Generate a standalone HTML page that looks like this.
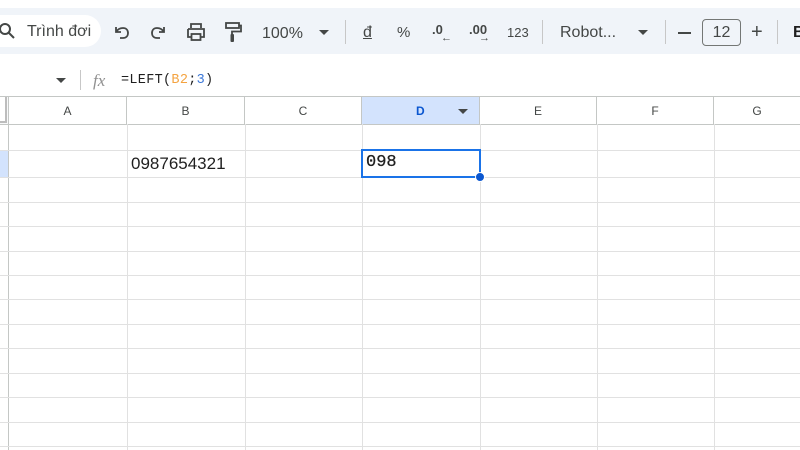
<!DOCTYPE html>
<html><head><meta charset="utf-8"><style>
*{margin:0;padding:0;box-sizing:border-box}
body{width:800px;height:450px;overflow:hidden;background:#fff;font-family:"Liberation Sans",Arial,sans-serif;position:relative;color:#444746}
.abs{position:absolute}
.tb{left:0;top:8px;width:800px;height:46px;background:#f0f4f9}
.pill{left:-20px;top:15px;width:121px;height:32px;background:#fff;border-radius:16px}
.t{position:absolute;font-size:16px;color:#444746;white-space:nowrap}
.sep{position:absolute;width:1px;background:#c7c7c7}
.vl{position:absolute;width:1px;background:#e1e1e1;top:124px;height:326px}
.hl{position:absolute;height:1px;background:#e1e1e1;left:0;width:800px}
.ch{position:absolute;top:97px;height:28px;font-size:12px;color:#444746;text-align:center;line-height:28px;border-right:1px solid #c4c7c5}
</style></head><body>
<div class="abs tb"></div>
<div class="abs pill"></div>
<svg class="abs" style="left:0;top:22px" width="18" height="18" viewBox="0 0 18 18"><circle cx="5" cy="7" r="5" fill="none" stroke="#444746" stroke-width="2"/><path d="M8.5 10.5L14 16" stroke="#444746" stroke-width="2"/></svg>
<div class="t" style="left:27px;top:23px">Trình đơi</div>
<svg class="abs" style="left:112px;top:23px" width="20" height="18" viewBox="0 0 20 18"><path d="M4 4v5h5M4.5 8.5C6 6 8 5 11 5c3 0 5 2 5 5s-2 5-5 5H8" fill="none" stroke="#444746" stroke-width="1.8"/></svg>
<svg class="abs" style="left:148px;top:23px" width="20" height="18" viewBox="0 0 20 18"><path d="M16 4v5h-5M15.5 8.5C14 6 12 5 9 5 6 5 4 7 4 10s2 5 5 5h3" fill="none" stroke="#444746" stroke-width="1.8"/></svg>
<svg class="abs" style="left:186px;top:22px" width="20" height="20" viewBox="0 0 20 20"><path d="M5 6V2h10v4M2 7h16v8h-3M5 15H2V7" fill="none" stroke="#444746" stroke-width="1.8"/><rect x="5.5" y="12" width="9" height="6" fill="none" stroke="#444746" stroke-width="1.8"/></svg>
<svg class="abs" style="left:224px;top:21px" width="18" height="22" viewBox="0 0 18 22"><rect x="2" y="2" width="13" height="5" fill="none" stroke="#444746" stroke-width="1.8"/><path d="M15 4.5h2v6H8v3" fill="none" stroke="#444746" stroke-width="1.8"/><rect x="6.5" y="13" width="3.5" height="8" rx="1" fill="#444746"/></svg>
<div class="t" style="left:262px;top:25px;font-size:16px">100%</div>
<svg class="abs" style="left:319px;top:30px" width="10" height="6"><path d="M0 0h10L5 5z" fill="#444746"/></svg>
<div class="sep" style="left:345px;top:20px;height:24px"></div>
<div class="t" style="left:363px;top:24px;text-decoration:underline">đ</div>
<div class="t" style="left:397px;top:24px;font-size:15px">%</div>
<div class="t" style="left:432px;top:22px;font-size:13px;font-weight:bold">.0</div>
<div class="t" style="left:441px;top:32px;font-size:11px">←</div>
<div class="t" style="left:469px;top:22px;font-size:13px;font-weight:bold">.00</div>
<div class="t" style="left:479px;top:32px;font-size:11px">→</div>
<div class="t" style="left:507px;top:25px;font-size:13px">123</div>
<div class="sep" style="left:542px;top:20px;height:24px"></div>
<div class="t" style="left:560px;top:24px">Robot...</div>
<svg class="abs" style="left:638px;top:30px" width="10" height="6"><path d="M0 0h10L5 5z" fill="#444746"/></svg>
<div class="sep" style="left:665px;top:20px;height:24px"></div>
<div class="abs" style="left:678px;top:32px;width:13px;height:2px;background:#444746"></div>
<div class="abs" style="left:702px;top:19px;width:39px;height:27px;border:1px solid #747775;border-radius:4px;font-size:16px;text-align:center;line-height:25px;color:#444746">12</div>
<div class="t" style="left:751px;top:21px;font-size:20px">+</div>
<div class="sep" style="left:777px;top:20px;height:24px"></div>
<div class="t" style="left:793px;top:24px;font-weight:bold;color:#1f1f1f">B</div>
<!-- formula bar -->
<svg class="abs" style="left:56px;top:78px" width="10" height="6"><path d="M0 0h10L5 5z" fill="#444746"/></svg>
<div class="sep" style="left:80px;top:70px;height:20px"></div>
<div class="t" style="left:93px;top:71px;font-family:'Liberation Serif',serif;font-style:italic;font-size:17px;color:#909090">fx</div>
<div class="t" style="left:121px;top:73px;font-family:'Liberation Mono',monospace;font-size:13.5px;color:#1f1f1f;letter-spacing:0.3px">=LEFT(<span style="color:#f4a340">B2</span>;<span style="color:#3c78d8">3</span>)</div>
<!-- headers -->
<div class="abs" style="left:0;top:96px;width:800px;height:1px;background:#c4c7c5"></div>
<div class="abs" style="left:0;top:97px;width:9px;height:28px;background:#f8f9fa;border-right:1px solid #c4c7c5"></div>
<div class="abs" style="left:0;top:97px;width:7px;height:26px;background:#fff;border-right:2px solid #bdbdbd;border-bottom:2px solid #bdbdbd"></div>
<div class="ch" style="left:9px;width:118px">A</div>
<div class="ch" style="left:127px;width:118px">B</div>
<div class="ch" style="left:245px;width:117px">C</div>
<div class="ch" style="left:362px;width:118px;background:#d3e3fd;color:#0b57d0;font-weight:bold;text-align:left;padding-left:54px">D<svg style="position:absolute;left:96px;top:12px" width="10" height="5"><path d="M0 0h10L5 5z" fill="#444746"/></svg></div>
<div class="ch" style="left:480px;width:117px">E</div>
<div class="ch" style="left:597px;width:117px">F</div>
<div class="ch" style="left:714px;width:86px;border-right:0">G</div>
<div class="abs" style="left:0;top:124px;width:800px;height:1px;background:#c4c7c5"></div>
<!-- row header -->
<div class="abs" style="left:0;top:125px;width:9px;height:325px;background:#fff;border-right:1px solid #c4c7c5"></div>
<div class="abs" style="left:0;top:150px;width:8px;height:27px;background:#d3e3fd"></div>
<!-- grid -->
<div class="vl" style="left:127px"></div><div class="vl" style="left:245px"></div><div class="vl" style="left:362px"></div><div class="vl" style="left:480px"></div><div class="vl" style="left:597px"></div><div class="vl" style="left:714px"></div>
<div class="hl" style="top:150px"></div><div class="hl" style="top:177px"></div><div class="hl" style="top:202px"></div><div class="hl" style="top:226px"></div><div class="hl" style="top:251px"></div><div class="hl" style="top:275px"></div><div class="hl" style="top:299px"></div><div class="hl" style="top:324px"></div><div class="hl" style="top:348px"></div><div class="hl" style="top:373px"></div><div class="hl" style="top:397px"></div><div class="hl" style="top:422px"></div><div class="hl" style="top:446px"></div>
<div class="t" style="left:131px;top:154px;font-size:17px;color:#1f1f1f">0987654321</div>
<div class="abs" style="left:361px;top:149px;width:120px;height:29px;border:2px solid #1a73e8"></div>
<div class="t" style="left:366px;top:153px;font-family:'Liberation Mono',monospace;font-size:17px;color:#1f1f1f;-webkit-text-stroke:0.3px #1f1f1f">098</div>
<div class="abs" style="left:475px;top:172px;width:10px;height:10px;border-radius:50%;background:#0b57d0;border:1px solid #fff"></div>
</body></html>
